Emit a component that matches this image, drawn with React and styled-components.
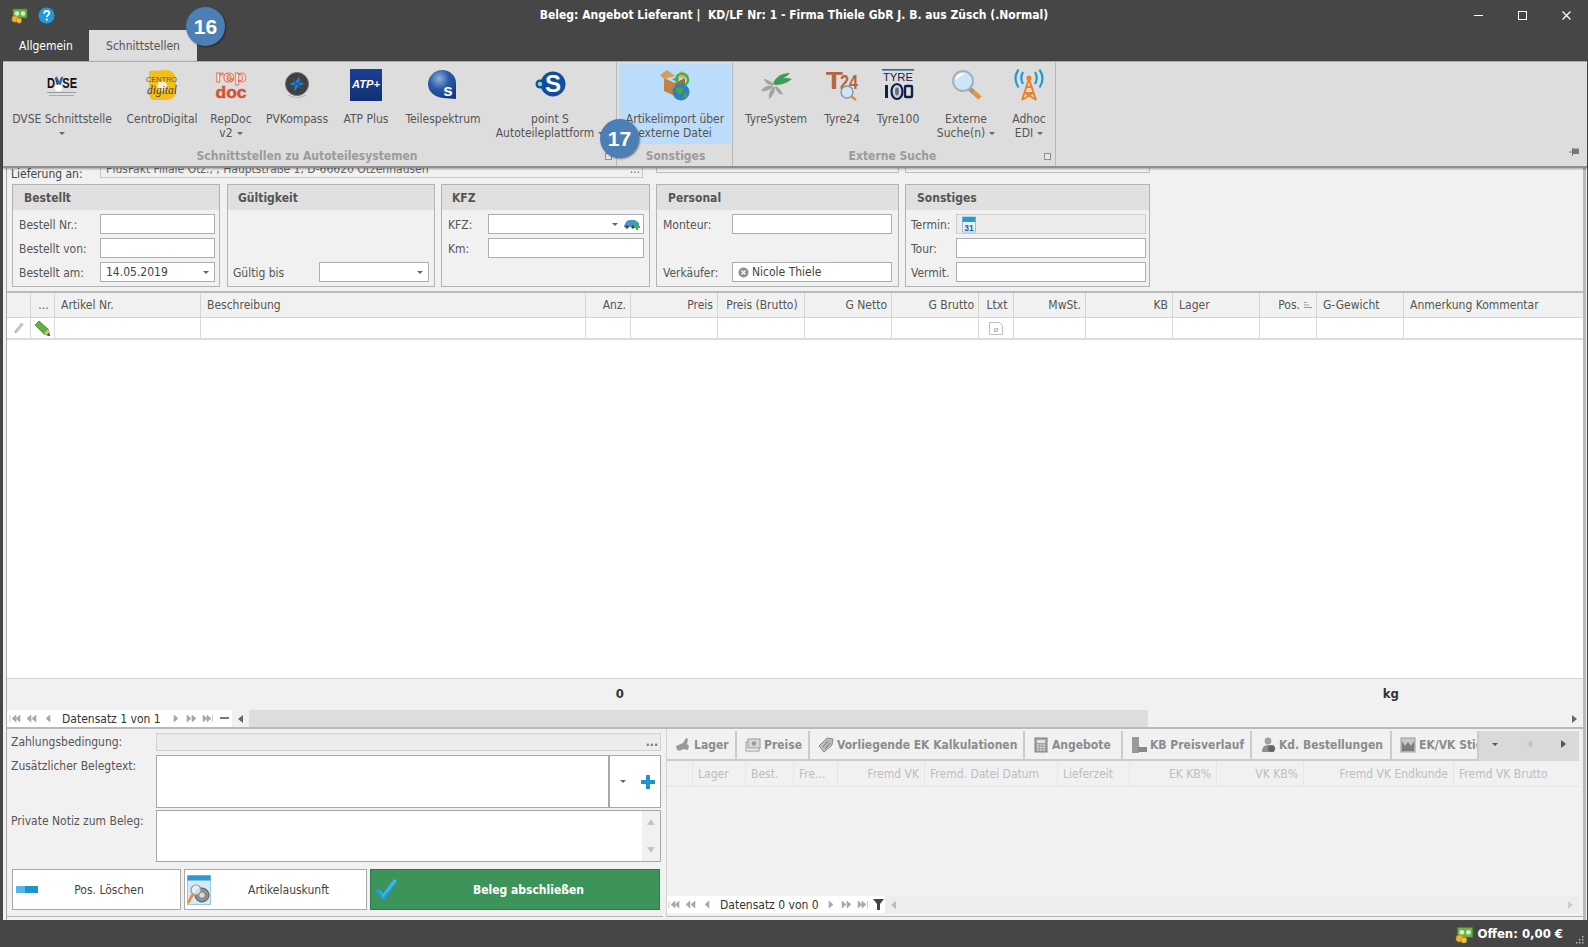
import React from "react";
import styled, { createGlobalStyle } from "styled-components";

const Global = createGlobalStyle`
  html, body { margin: 0; padding: 0; background: #464646; }
  body { font-family: "DejaVu Sans Condensed", "DejaVu Sans", sans-serif; font-stretch: condensed; font-size: 12px; color: #444; }
  * { box-sizing: border-box; }
`;

const Page = styled.div`
  position: relative; width: 1588px; height: 947px; background: #464646; display: flex; flex-direction: column; overflow: hidden;
`;
const TitleBar = styled.div`
  height: 30px; display: flex; align-items: center; flex: none; position: relative;
`;
const QuickIcons = styled.div`
  display: flex; align-items: center; gap: 10px; padding-left: 10px; width: 300px;
`;
const Title = styled.div`
  flex: 1; text-align: center; color: #fff; font-weight: 700; white-space: pre; font-size: 12px;
`;
const WinButtons = styled.div`
  width: 300px; display: flex; justify-content: flex-end; align-items: center; gap: 35px; padding-right: 17px;
`;
const TabBar = styled.div`
  height: 31px; flex: none; display: flex; align-items: flex-end; padding-left: 3px;
`;
const TopTab = styled.div`
  height: 31px; display: flex; align-items: center; justify-content: center; width: ${p => p.$w}px;
  color: ${p => p.$active ? "#555" : "#fff"}; background: ${p => p.$active ? "#dddddd" : "transparent"};
`;
const Ribbon = styled.div`
  height: 107px; flex: none; margin: 0 1px 0 3px; background: #dddddd; border-top: 1px solid #ababab; border-bottom: 2px solid #8f8f8f;
  display: flex; position: relative; z-index: 3; box-shadow: 0 1px 2px rgba(0,0,0,.35);
`;
const RibbonGroup = styled.div`
  width: ${p => p.$w}px; border-right: 1px solid #b9b9b9; display: flex; flex-direction: column; padding: 2px 0 0 ${p => p.$pl}px; position: relative;
`;
const GroupButtons = styled.div`
  display: flex; height: 80px;
`;
const RibbonBtn = styled.div`
  width: ${p => p.$w}px; height: 80px; padding-top: 5px; display: flex; flex-direction: column; align-items: center; text-align: center;
  background: ${p => p.$hover ? "#bcdcfb" : "transparent"}; line-height: 14px; color: #555; white-space: nowrap;
`;
const RibbonIcon = styled.div`
  width: 32px; height: 32px; margin-bottom: 11px; flex: none;
`;
const GroupLabel = styled.div`
  text-align: center; font-weight: 700; color: #9b9b9b; line-height: 14px; margin-top: 5px; padding-right: ${p => p.$pr || 0}px; white-space: nowrap;
`;
const Launcher = styled.div`
  position: absolute; right: 4px; bottom: 6px; width: 7px; height: 7px; border: 1px solid #8f8f8f; background: #e6e6e6;
`;
const Caret = styled.span`
  display: inline-block; width: 0; height: 0; border-left: 3px solid transparent; border-right: 3px solid transparent; border-top: 3px solid ${p => p.$c || "#666"};
  vertical-align: middle; margin-left: ${p => p.$ml ?? 4}px;
`;
const Pin = styled.div`
  position: absolute; right: 8px; bottom: 10px; width: 10px; height: 8px;
`;
const Bubble = styled.div`
  position: absolute; left: ${p => p.$x}px; top: ${p => p.$y}px; width: 39px; height: 39px; border-radius: 50%; background: #4c7fb6; color: #fff;
  display: flex; align-items: center; justify-content: center; font: 700 21px "Liberation Sans", sans-serif; z-index: 9; box-shadow: 1px 1px 2px rgba(0,0,0,.45);
`;
const Main = styled.div`
  flex: none; height: 752px; margin: 0 1px 0 3px; background: #f1f1f1; padding-left: 3px; display: flex;
`;
const Inner = styled.div`
  flex: 1; min-width: 0; border-left: 1px solid #a9a9a9; border-right: 3px solid #b9b9b9; margin-right: 1px; display: flex; flex-direction: column;
`;
const DeliveryRow = styled.div`
  height: 13px; flex: none; overflow: hidden; display: flex; align-items: flex-end; position: relative; padding-left: 4px;
`;
const DeliveryLabel = styled.div`
  width: 89px; line-height: 14px; height: 14px;
`;
const DeliveryInput = styled.div`
  width: 543px; height: 20px; margin-bottom: 3px; border: 1px solid #c8c8c8; padding: 3px 2px 0 5px; line-height: 14px; display: flex; justify-content: space-between; white-space: nowrap; color: #666;
`;
const GhostInput = styled.div`
  width: ${p => p.$w}px; height: 20px; margin: 0 0 8px ${p => p.$ml}px; border: 1px solid #bdbdbd;
`;
const Groups = styled.div`
  display: flex; padding: 3px 0 0 5px; flex: none; height: 106px;
`;
const Group = styled.div`
  width: ${p => p.$w}px; margin-right: ${p => p.$mr}px; height: 103px; border: 1px solid #b3b3b3; flex: none;
`;
const GroupHead = styled.div`
  height: 25px; background: #e0e0e0; font-weight: 700; color: #555; display: flex; align-items: center; padding-left: ${p => p.$pl}px;
`;
const GroupBody = styled.div`
  display: grid; grid-auto-rows: 20px; row-gap: 4px; padding: 4px ${p => p.$pr}px 0 ${p => p.$pl}px;
`;
const Field = styled.div`
  display: grid; grid-template-columns: ${p => p.$label}px 1fr; align-items: center;
`;
const FieldLabel = styled.div`
  white-space: nowrap; color: #555; padding-top: 1px;
`;
const Input = styled.div`
  height: 20px; background: ${p => p.$disabled ? "#ececec" : "#fff"}; border: 1px solid ${p => p.$disabled ? "#cfcfcf" : "#aeaeae"};
  display: flex; align-items: center; padding: 0 5px; color: #444; white-space: nowrap; justify-content: ${p => p.$between ? "space-between" : "flex-start"}; gap: 3px;
`;
const ComboRight = styled.span`
  display: flex; align-items: center; gap: 5px; margin-right: -2px;
`;
const Grid = styled.div`
  flex: 1; min-height: 0; border-top: 2px solid #b9b9b9; display: flex; flex-direction: column; margin-top: 4px;
`;
const mainCols = "24px 24px 146px 385px 45px 87px 87px 87px 87px 35px 72px 87px 87px 57px 87px 179px";
const HeadRow = styled.div`
  display: grid; grid-template-columns: ${mainCols}; height: 25px; background: #f1f1f1; border-bottom: 1px solid #d4d4d4; flex: none;
`;
const HeadCell = styled.div`
  border-right: 1px solid #d4d4d4; display: flex; align-items: center; padding: 0 4px 0 6px; color: #555; white-space: nowrap; overflow: hidden; justify-content: ${p => p.$a || "flex-start"};
  &:last-child { border-right: none; }
`;
const DataRow = styled.div`
  display: grid; grid-template-columns: ${mainCols}; height: 22px; background: #fff; border-bottom: 2px solid #dcdcdc; flex: none;
`;
const DataCell = styled.div`
  border-right: 1px solid #d9d9d9; display: flex; align-items: center; justify-content: center;
  &:last-child { border-right: none; }
`;
const GridEmpty = styled.div`
  flex: 1; background: #fff;
`;
const FooterRow = styled.div`
  display: grid; grid-template-columns: ${mainCols}; height: 32px; flex: none; border-top: 1px solid #d4d4d4; background: #f1f1f1; font-weight: 700; color: #333; font-size: 13px; align-items: center; padding-bottom: 2px;
`;
const FooterCell = styled.div`
  grid-column: ${p => p.$col}; text-align: right; padding-right: ${p => p.$pr}px;
`;
const NavBar = styled.div`
  height: ${p => p.$h}px; flex: none; display: flex; align-items: center; background: ${p => p.$bg || "#f1f1f1"};
`;
const NavWhite = styled.div`
  width: ${p => p.$w}px; height: 100%; background: #fff; display: flex; align-items: center; padding-left: ${p => p.$pl}px; flex: none; color: #333; white-space: nowrap;
`;
const NavSlot = styled.div`
  width: ${p => p.$w}px; margin-left: ${p => p.$ml || 0}px; height: 100%; display: flex; align-items: center; justify-content: center; flex: none;
`;
const NavText = styled.div`
  width: ${p => p.$w}px; flex: none; text-align: left; padding-left: ${p => p.$pl || 0}px;
`;
const Track = styled.div`
  width: ${p => p.$w}px; height: 100%; flex: none; background: ${p => p.$bg || "#dddddd"};
`;
const Spacer = styled.div`
  flex: 1;
`;
const Bottom = styled.div`
  height: 193px; flex: none; border-top: 2px solid #b9b9b9; display: flex; background: #f1f1f1; padding-bottom: 3px;
`;
const BottomLeft = styled.div`
  width: 656px; flex: none; padding: 4px 2px 0 5px; border-bottom: 1px solid #b5b5b5; display: flex; flex-direction: column;
`;
const FormGrid = styled.div`
  display: grid; grid-template-columns: 144px 505px; grid-template-rows: 22px 55px 52px;
`;
const FormLabel = styled.div`
  color: #555; padding-top: ${p => p.$pt}px; margin-left: -1px; white-space: nowrap; line-height: 14px;
`;
const DisabledInput = styled.div`
  background: #ececec; border: 1px solid #d2d2d2; margin-bottom: 4px; display: flex; justify-content: flex-end; align-items: center; padding-right: 2px; color: #777; line-height: 10px; font-weight: 700;
`;
const TextBox = styled.div`
  background: #fff; border: 1px solid #a8a8a8; margin-bottom: ${p => p.$mb || 0}px; display: flex; justify-content: flex-end;
`;
const ComboSide = styled.div`
  width: 52px; border-left: 2px solid #a8a8a8; display: flex; align-items: center; padding-left: 10px; gap: 15px;
`;
const Scroller = styled.div`
  width: 18px; background: #f1f1f1; display: flex; flex-direction: column; justify-content: space-between; align-items: center; padding: 8px 0;
`;
const ScrollArrow = styled.span`
  width: 0; height: 0; border-left: 4px solid transparent; border-right: 4px solid transparent;
  ${p => p.$up ? "border-bottom: 6px solid #c4c4c4;" : "border-top: 6px solid #c4c4c4;"}
`;
const ActionRow = styled.div`
  display: flex; gap: 3px; margin-top: 7px;
`;
const Action = styled.div`
  width: ${p => p.$w}px; height: 41px; flex: none; display: flex; align-items: center; padding-left: ${p => p.$pl}px;
  background: ${p => p.$green ? "#3c945a" : "#fff"}; border: 1px solid ${p => p.$green ? "#2a7a45" : "#a9a9a9"}; color: ${p => p.$green ? "#fff" : "#444"}; font-weight: ${p => p.$green ? 700 : 400};
`;
const ActionText = styled.div`
  flex: 1; text-align: center; white-space: nowrap;
`;
const BottomRight = styled.div`
  flex: 1; min-width: 0; margin-left: 3px; border-left: 1px solid #d4d4d4; padding: 2px 4px 3px 0; display: flex; flex-direction: column; border-bottom: 1px solid #b5b5b5;
`;
const TabStrip = styled.div`
  height: 30px; flex: none; display: flex; border-bottom: 2px solid #cbcbcb;
`;
const PageTab = styled.div`
  width: ${p => p.$w}px; flex: none; overflow: hidden; display: flex; align-items: center; padding-left: 8px; gap: 3px; font-weight: 700; color: #8c8c8c; white-space: nowrap; border-right: 2px solid #cbcbcb;
  &:last-of-type { border-right: none; }
`;
const TabScroll = styled.div`
  flex: 1; background: #d9d9d9; display: flex; align-items: center; justify-content: space-between; padding: 0 13px 4px 13px; margin-bottom: -2px;
`;
const Tri = styled.span`
  width: 0; height: 0; border-top: 4px solid transparent; border-bottom: 4px solid transparent;
  ${p => p.$dir === "l" ? `border-right: 5px solid ${p.$c};` : `border-left: 5px solid ${p.$c};`}
`;
const subCols = "26px 53px 48px 44px 87px 133px 72px 87px 87px 150px 1fr";
const SubHead = styled.div`
  display: grid; grid-template-columns: ${subCols}; height: 26px; flex: none; background: #f1f1f1; border-bottom: 1px solid #e3e3e3;
`;
const SubCell = styled.div`
  border-right: 1px solid #e6e6e6; display: flex; align-items: center; padding: 0 5px; color: #bdbdbd; overflow: hidden; white-space: nowrap; justify-content: ${p => p.$a || "flex-start"};
  &:last-child { border-right: none; }
`;
const SubBody = styled.div`
  flex: 1; background: #f2f2f2;
`;
const Status = styled.div`
  flex: 1; display: flex; align-items: center; justify-content: flex-end; color: #fff; font-weight: 700; padding-right: 25px; gap: 4px; font-size: 13px; position: relative;
`;
const Grip = styled.div`
  position: absolute; right: 4px; bottom: 3px; width: 9px; height: 9px;
`;

const G = ({ children, s = 32, v = 32 }) => <svg width={s} height={s} viewBox={`0 0 ${v} ${v}`} style={{ display: "block" }}>{children}</svg>;

const MoneyIcon = ({ s = 18 }) => (
  <G s={s} v={18}>
    <rect x="3" y="3" width="14" height="9" fill="#6fb04c" stroke="#3d7a2c" strokeWidth=".7" />
    <circle cx="7" cy="7.5" r="2.2" fill="#d7efc4" /><circle cx="13" cy="7.5" r="2.2" fill="#d7efc4" />
    <circle cx="5" cy="13" r="3.2" fill="#e9b52a" stroke="#b4801a" strokeWidth=".6" /><circle cx="9" cy="14.6" r="2.6" fill="#f1c23c" stroke="#b4801a" strokeWidth=".6" />
  </G>
);
const HelpIcon = () => (
  <svg width="17" height="17" viewBox="0 0 17 17" style={{ display: "block" }}>
    <circle cx="8.5" cy="8.5" r="8" fill="#1e9be0" />
    <path d="M6 6.6c0-1.6 1.2-2.6 2.7-2.6s2.6 1 2.6 2.2c0 1.9-2.5 1.9-2.5 3.8" fill="none" stroke="#fff" strokeWidth="1.8" />
    <circle cx="8.8" cy="12.6" r="1.1" fill="#fff" />
  </svg>
);
const Dvse = () => (
  <G>
    <text x="1" y="19" fontFamily="Liberation Sans" fontWeight="700" fontSize="14" fill="#111" textLength="30" lengthAdjust="spacingAndGlyphs">DVSE</text>
    <path d="M10 8 l3.5 7 l3-7" fill="none" stroke="#2b66c4" strokeWidth="2.2" />
    <circle cx="12.5" cy="19" r="3.6" fill="#fff" />
    <rect x="1" y="23" width="29" height="1" fill="#999" /><rect x="3" y="26" width="25" height="1" fill="#aaa" />
  </G>
);
const Centro = () => (
  <G>
    <path d="M3 2 L22 1 Q30 3 30 12 L30 24 Q29 30 21 31 L8 31 Q3 30 3 25 Z" fill="#f6bd16" />
    <circle cx="16" cy="17" r="5" fill="#fff" opacity=".8" />
    <text x="0" y="13" fontFamily="Liberation Sans" fontSize="7.5" fill="#555" textLength="31" lengthAdjust="spacingAndGlyphs">CENTRO</text>
    <text x="1" y="25" fontFamily="Liberation Serif" fontStyle="italic" fontSize="12" fill="#444" textLength="30" lengthAdjust="spacingAndGlyphs">digital</text>
  </G>
);
const RepDoc = () => (
  <G>
    <text x="16" y="13" textAnchor="middle" fontFamily="Liberation Sans" fontWeight="700" fontSize="17" fill="#fff" stroke="#e2705a" strokeWidth=".9" textLength="31" lengthAdjust="spacingAndGlyphs">rep</text>
    <text x="16" y="29" textAnchor="middle" fontFamily="Liberation Sans" fontWeight="700" fontSize="17" fill="#d9502f" stroke="#d9502f" strokeWidth=".5" textLength="31" lengthAdjust="spacingAndGlyphs">doc</text>
  </G>
);
const Kompass = () => (
  <G>
    <circle cx="16" cy="15" r="11.5" fill="#3f4042" stroke="#6e6e6e" /><path d="M7 26 Q16 31 25 26" fill="none" stroke="#bdbdbd" strokeWidth="1.2" />
    <path d="M19 7 L18 13 L24 15 L18 16.5 L13 23 L14 17 L8 15 L14 13 Z" fill="#2c7fd0" />
    <path d="M11 9 L16 14 L22 10 L18 15 L21 21 L16 16 L10 20 L14 15 Z" fill="#1d5da6" />
  </G>
);
const Atp = () => (
  <G>
    <defs><linearGradient id="atp" x1="0" y1="0" x2="0" y2="1"><stop offset="0" stopColor="#1a3f95" /><stop offset="1" stopColor="#123076" /></linearGradient></defs>
    <rect width="32" height="32" fill="url(#atp)" />
    <text x="16" y="19" textAnchor="middle" fontFamily="Liberation Sans" fontStyle="italic" fontWeight="700" fontSize="10" fill="#fff" textLength="28" lengthAdjust="spacingAndGlyphs">ATP+</text>
  </G>
);
const Teile = () => (
  <G>
    <defs><radialGradient id="tsp" cx=".4" cy=".3" r=".8"><stop offset="0" stopColor="#8fb0dc" /><stop offset=".45" stopColor="#2a5ba8" /><stop offset="1" stopColor="#12377c" /></radialGradient></defs>
    <path d="M15 1 C7 1 1 8 1 15 C1 23 8 28 16 29 L29 30 L29 14 C29 7 23 1 15 1 Z" fill="url(#tsp)" />
    <text x="21" y="27" textAnchor="middle" fontFamily="Liberation Sans" fontWeight="700" fontSize="17" fill="#fff">s</text>
  </G>
);
const PointS = () => (
  <G>
    <circle cx="19" cy="15" r="12.5" fill="#0f4fa1" /><circle cx="6" cy="15" r="4.5" fill="#0f4fa1" /><circle cx="6" cy="15" r="2.2" fill="#8fd9a3" />
    <text x="19" y="23" textAnchor="middle" fontFamily="Liberation Sans" fontWeight="700" fontSize="24" fill="#fff">S</text>
  </G>
);
const ImportIcon = () => (
  <G>
    <path d="M5 9 L16 14 L16 27 L5 22 Z" fill="#c08345" /><path d="M16 14 L26 9 L26 20 L16 27 Z" fill="#a9692f" />
    <path d="M1 6 L8 1 L16 7 L5 10 Z" fill="#d79b5c" /><path d="M16 7 L22 2 L30 6 L26 10 Z" fill="#e0ad71" />
    <circle cx="22" cy="23" r="8.5" fill="#2f81bc" /><path d="M17 19 Q21 17 24 20 Q25 24 21 25 Q17 25 17 19 M26 24 Q29 25 28 28 Q25 30 24 28 Z" fill="#4da24a" />
    <path d="M17 11 A6 6 0 1 1 26 16" fill="none" stroke="#39b54a" strokeWidth="2.4" /><path d="M13 10 L20 8 L19 14 Z" fill="#39b54a" />
  </G>
);
const TyreSys = () => (
  <G>
    <path d="M13 14 Q19 3 30 4 Q26 9 20 10 Q26 8 32 10 Q25 16 15 16 Z" fill="#3f9b58" />
    <path d="M14 15 Q7 10 4 10 Q5 15 13 17 Z M12 17 Q4 16 1 22 Q8 23 13 18 Z M13 18 Q8 24 9 30 Q15 26 15 18 Z M15 18 Q17 25 23 26 Q21 20 16 17 Z" fill="#a3a3a3" />
  </G>
);
const T24 = () => (
  <G>
    <text x="-1" y="20" fontFamily="Liberation Sans" fontWeight="700" fontSize="24" fill="#b4683e" textLength="18" lengthAdjust="spacingAndGlyphs">T</text>
    <text x="14" y="20" fontFamily="Liberation Sans" fontWeight="700" fontSize="20" fill="#b4683e" textLength="18" lengthAdjust="spacingAndGlyphs">24</text>
    <circle cx="21" cy="23" r="6" fill="#cfe5f5" stroke="#7b98ab" strokeWidth="1.3" /><path d="M25.5 27.5 L30 31" stroke="#e48a38" strokeWidth="2.4" />
  </G>
);
const Tyre100 = () => (
  <G>
    <rect x="0" y="0" width="32" height="1.6" fill="#1f6db0" />
    <text x="16" y="12" textAnchor="middle" fontFamily="Liberation Sans" fontSize="11" fill="#10204a" textLength="30" lengthAdjust="spacingAndGlyphs">TYRE</text>
    <rect x="3" y="16" width="3" height="13" fill="#10204a" />
    <ellipse cx="15" cy="22.5" rx="5.5" ry="7.5" fill="#cfd4dd" stroke="#10204a" strokeWidth="2.2" />
    <ellipse cx="15" cy="22.5" rx="2" ry="4" fill="#65707f" />
    <rect x="23" y="17" width="7" height="11" fill="none" stroke="#10204a" strokeWidth="2.4" rx="1" />
  </G>
);
const Magnifier = () => (
  <G>
    <circle cx="13" cy="12" r="10" fill="#cde5f6" stroke="#9fb2bf" strokeWidth="2" /><path d="M6 10 Q9 5 14 5" stroke="#fff" strokeWidth="2" fill="none" />
    <path d="M20 20 L30 29" stroke="#e8913c" strokeWidth="4.5" /><path d="M20 20 L23 23" stroke="#8d9aa2" strokeWidth="4" />
  </G>
);
const Antenna = () => (
  <G>
    <path d="M16 10 L9 31 M16 10 L23 31 M12 24 L20 24 M13.5 18 L18.5 18 M9 31 L20 24 M23 31 L12 24" stroke="#e8842f" strokeWidth="2" fill="none" />
    <circle cx="16" cy="9" r="2.6" fill="#e8842f" />
    <g fill="none" stroke="#1e9ad6" strokeWidth="2.2">
      <path d="M10 3 Q6.5 9 10 15" /><path d="M5.5 0.5 Q-.5 9 5.5 18.5" /><path d="M22 3 Q25.5 9 22 15" /><path d="M26.5 .5 Q32.5 9 26.5 18.5" />
    </g>
  </G>
);
const WinMin = () => <svg width="9" height="9" viewBox="0 0 9 9"><rect y="4" width="9" height="1" fill="#fff" /></svg>;
const WinMax = () => <svg width="9" height="9" viewBox="0 0 9 9"><rect x=".5" y=".5" width="8" height="8" fill="none" stroke="#fff" /></svg>;
const WinClose = () => <svg width="9" height="9" viewBox="0 0 9 9"><path d="M.5 .5 L8.5 8.5 M8.5 .5 L.5 8.5" stroke="#fff" strokeWidth="1.2" /></svg>;
const PinIcon = () => <svg width="10" height="8" viewBox="0 0 10 8" style={{ display: "block" }}><path d="M0 4 H4 M3.5 0 V8 M4 1 H9.5 V5.5 H4" fill="#777" stroke="#777" strokeWidth="1" /></svg>;
const CarIcon = () => <svg width="17" height="14" viewBox="0 0 17 14" style={{ display: "block" }}><path d="M1 9 L3 5 Q4 3 7 3 H12 L16 6 V10 H1 Z" fill="#4a93c7" /><circle cx="4" cy="10" r="1.7" fill="#444" /><circle cx="10" cy="10" r="1.7" fill="#444" /><path d="M11 10 H17 M14 7 V13" stroke="#39b54a" strokeWidth="2.2" /></svg>;
const Calendar = () => <svg width="14" height="17" viewBox="0 0 14 17" style={{ display: "block" }}><rect x=".5" y="1" width="13" height="15" fill="#e9f3fa" stroke="#9cc0da" /><rect x=".5" y="1" width="13" height="5" fill="#2d97d8" /><text x="7" y="15" textAnchor="middle" fontFamily="Liberation Sans" fontWeight="700" fontSize="8.5" fill="#1d5f8e">31</text></svg>;
const ClearIcon = () => <svg width="11" height="11" viewBox="0 0 11 11" style={{ display: "block" }}><circle cx="5.5" cy="5.5" r="5" fill="#8e8e8e" /><path d="M3.5 3.5 L7.5 7.5 M7.5 3.5 L3.5 7.5" stroke="#fff" strokeWidth="1.3" /></svg>;
const RowPencil = () => <svg width="10" height="12" viewBox="0 0 10 12" style={{ display: "block" }}><path d="M7.5 1 L9 2.5 L3 10 L1 11 L1.5 8.5 Z" fill="#cfcfcf" stroke="#9c9c9c" strokeWidth=".7" /></svg>;
const GreenPencil = () => <svg width="16" height="15" viewBox="0 0 16 15" style={{ display: "block" }}><path d="M4 0 L0 4 L9 13 L15 15 L13 8 Z" fill="#5db33c" stroke="#38791f" strokeWidth=".7" /><path d="M9 13 L15 15 L13 8 Z" fill="#e8b980" /><path d="M13.5 12 L15 15 L12 14 Z" fill="#333" /></svg>;
const NoteIcon = () => <svg width="16" height="13" viewBox="0 0 16 13" style={{ display: "block" }}><path d="M1.5 .5 H11 L14.5 3.5 V12.5 H1.5 Z" fill="#fff" stroke="#bcbcbc" /><text x="8" y="10" textAnchor="middle" fontFamily="Liberation Serif" fontStyle="italic" fontSize="9" fill="#888">a</text></svg>;
const SortIcon = () => <svg width="8" height="8" viewBox="0 0 8 8" style={{ display: "block", marginLeft: 4 }}><path d="M0 1.5 H2.5 M0 4 H5 M0 6.5 H8" stroke="#999" /></svg>;

const navPaths = {
  first: "M1 1 V8 M7 1 L3 4.5 L7 8 Z M11 1 L7 4.5 L11 8 Z",
  prevPage: "M5 1 L1 4.5 L5 8 Z M10 1 L6 4.5 L10 8 Z",
  prev: "M7 1 L3 4.5 L7 8 Z",
  next: "M4 1 L8 4.5 L4 8 Z",
  nextPage: "M1 1 L5 4.5 L1 8 Z M6 1 L10 4.5 L6 8 Z",
  last: "M1 1 L5 4.5 L1 8 Z M5 1 L9 4.5 L5 8 Z M10.5 1 V8",
};
const NavIcon = ({ k, c = "#a8a8a8" }) => <svg width="12" height="9" viewBox="0 0 12 9" style={{ display: "block" }}><path d={navPaths[k]} fill={c} stroke={c} strokeWidth=".6" /></svg>;
const Minus = () => <svg width="9" height="3" viewBox="0 0 9 3" style={{ display: "block" }}><rect width="9" height="2" fill="#777" /></svg>;
const Filter = () => <svg width="11" height="11" viewBox="0 0 11 11" style={{ display: "block" }}><path d="M0 0 H11 L7 5 V11 H4 V5 Z" fill="#444" /></svg>;
const PlusIcon = () => <svg width="14" height="16" viewBox="0 0 14 16" style={{ display: "block" }}><path d="M5 1 H9 V6 H14 V10 H9 V15 H5 V10 H0 V6 H5 Z" fill="#1f93d0" /></svg>;
const BarIcon = () => <svg width="22" height="8" viewBox="0 0 22 8" style={{ display: "block" }}><rect width="22" height="7" fill="#1f93d0" /><rect width="9" height="7" fill="#53b6e6" /></svg>;
const PartIcon = () => <svg width="24" height="30" viewBox="0 0 24 30" style={{ display: "block" }}><rect x=".5" y=".5" width="23" height="29" fill="#d6e9f5" stroke="#9cc8e3" /><rect x=".5" y=".5" width="23" height="5" fill="#2d97d8" /><circle cx="15" cy="20" r="7" fill="#8a8f93" stroke="#555" /><circle cx="15" cy="20" r="2.6" fill="#ddd" /><circle cx="9" cy="15" r="5" fill="#e4f1fa" fillOpacity=".8" stroke="#8d9aa2" strokeWidth="1.2" /><path d="M6 19 L1 28" stroke="#e8913c" strokeWidth="2.6" /></svg>;
const CheckIcon = () => <svg width="24" height="24" viewBox="0 0 24 24" style={{ display: "block" }}><path d="M1 13 L4 10 L9 16 L20 1 L23 3 L10 23 Z" fill="#1f9be0" /><path d="M4 10 L9 16 L20 1 L23 3 L9 19 Z" fill="#3db5ef" /></svg>;

const TI = ({ children }) => <svg width="16" height="16" viewBox="0 0 16 16" style={{ display: "block", flex: "none" }}>{children}</svg>;
const tabIcons = [
  <TI><path d="M1 9 L8 6 L8 12 Q5 15 2 13 Z M8 6 L11 1 L13 2 L12 7 L14 9 L13 13 L8 12 Z" fill="#9a9a9a" /></TI>,
  <TI><rect x="1" y="5" width="13" height="9" fill="none" stroke="#9a9a9a" /><rect x="3" y="2" width="12" height="9" fill="#d8d8d8" stroke="#9a9a9a" /><circle cx="9" cy="6.5" r="2.2" fill="#9a9a9a" /></TI>,
  <TI><path d="M1 9 L9 1 L15 2 L14 8 L6 15 Z" fill="#bdbdbd" stroke="#8a8a8a" /><path d="M5 10 L10 4 M7 12 L12 6" stroke="#777" /></TI>,
  <TI><rect x="2" y="1" width="12" height="14" fill="#a5a5a5" stroke="#808080" /><rect x="4" y="3" width="8" height="3" fill="#e3e3e3" /><path d="M4 8 H12 M4 10.5 H12 M4 13 H12" stroke="#e3e3e3" strokeDasharray="2 1" /></TI>,
  <TI><rect x="1" y="0" width="7" height="16" fill="#9a9a9a" /><rect x="7" y="10" width="9" height="5" fill="#8a8a8a" /></TI>,
  <TI><circle cx="8" cy="4" r="3.4" fill="#9f9f9f" /><path d="M2 15 Q2 8 8 8 Q13 8 14 15 Z" fill="#8f8f8f" /><circle cx="11.5" cy="11.5" r="3.6" fill="#666" /></TI>,
  <TI><rect x="1" y="1" width="14" height="14" fill="#c8c8c8" stroke="#999" /><path d="M2 4 L5 9 L8 5 L11 9 L14 4 V14 H2 Z" fill="#7e7e7e" /></TI>,
];

const btnsA = [
  ["DVSE Schnittstelle", null, 112, <Dvse />, "below"],
  ["CentroDigital", null, 88, <Centro />],
  ["RepDoc", "v2", 50, <RepDoc />, "inline"],
  ["PVKompass", null, 82, <Kompass />],
  ["ATP Plus", null, 56, <Atp />],
  ["Teilespektrum", null, 98, <Teile />],
  ["point S", "Autoteileplattform", 116, <PointS />, "inline"],
];
const btnsC = [
  ["TyreSystem", null, 76, <TyreSys />],
  ["Tyre24", null, 56, <T24 />],
  ["Tyre100", null, 56, <Tyre100 />],
  ["Externe", "Suche(n)", 80, <Magnifier />, "inline"],
  ["Adhoc", "EDI", 46, <Antenna />, "inline"],
];
const RBtn = ({ b }) => (
  <RibbonBtn $w={b[2]}>
    <RibbonIcon>{b[3]}</RibbonIcon>
    <div>{b[0]}</div>
    {b[1] && <div>{b[1]}{b[4] === "inline" && <Caret />}</div>}
    {b[4] === "below" && <div><Caret $ml={0} /></div>}
  </RibbonBtn>
);

const mainHead = [
  ["", 0], ["...", "center"], ["Artikel Nr."], ["Beschreibung"], ["Anz.", "flex-end"], ["Preis", "flex-end"], ["Preis (Brutto)", "center"], ["G Netto", "flex-end"], ["G Brutto", "flex-end"], ["Ltxt", "center"], ["MwSt.", "flex-end"], ["KB", "flex-end"], ["Lager"], ["Pos.", "flex-end", true], ["G-Gewicht"], ["Anmerkung Kommentar"],
];
const subHead = [["", 0], ["Lager"], ["Best."], ["Fre..."], ["Fremd VK", "flex-end"], ["Fremd. Datei Datum"], ["Lieferzeit"], ["EK KB%", "flex-end"], ["VK KB%", "flex-end"], ["Fremd VK Endkunde", "flex-end"], ["Fremd VK Brutto"]];
const pageTabs = [["Lager", 70], ["Preise", 73], ["Vorliegende EK Kalkulationen", 215], ["Angebote", 98], ["KB Preisverlauf", 129], ["Kd. Bestellungen", 140], ["EK/VK Stichtag", 87]];

export default function App() {
  return (
    <Page>
      <Global />
      <TitleBar>
        <QuickIcons><MoneyIcon /><HelpIcon /></QuickIcons>
        <Title>{"Beleg: Angebot Lieferant |  KD/LF Nr: 1 - Firma Thiele GbR J. B. aus Züsch (.Normal)"}</Title>
        <WinButtons><WinMin /><WinMax /><WinClose /></WinButtons>
      </TitleBar>
      <TabBar>
        <TopTab $w={86}>Allgemein</TopTab>
        <TopTab $w={108} $active>Schnittstellen</TopTab>
      </TabBar>
      <Bubble $x={186} $y={7}>16</Bubble>
      <Bubble $x={600} $y={119}>17</Bubble>
      <Ribbon>
        <RibbonGroup $w={614} $pl={3}>
          <GroupButtons>{btnsA.map(b => <RBtn key={b[0]} b={b} />)}</GroupButtons>
          <GroupLabel $pr={8}>Schnittstellen zu Autoteilesystemen</GroupLabel>
          <Launcher />
        </RibbonGroup>
        <RibbonGroup $w={116} $pl={2}>
          <GroupButtons><RibbonBtn $w={112} $hover><RibbonIcon><ImportIcon /></RibbonIcon><div>Artikelimport über</div><div>externe Datei</div></RibbonBtn></GroupButtons>
          <GroupLabel>Sonstiges</GroupLabel>
        </RibbonGroup>
        <RibbonGroup $w={323} $pl={5}>
          <GroupButtons>{btnsC.map(b => <RBtn key={b[0]} b={b} />)}</GroupButtons>
          <GroupLabel $pr={8}>Externe Suche</GroupLabel>
          <Launcher />
        </RibbonGroup>
        <Pin><PinIcon /></Pin>
      </Ribbon>
      <Main>
        <Inner>
          <DeliveryRow>
            <DeliveryLabel>Lieferung an:</DeliveryLabel>
            <DeliveryInput><span>PlusFakt Filiale Otz., , Hauptstraße 1, D-66620 Otzenhausen</span><span>...</span></DeliveryInput>
            <GhostInput $w={243} $ml={13} />
            <GhostInput $w={245} $ml={6} />
          </DeliveryRow>
          <Groups>
            <Group $w={208} $mr={7}>
              <GroupHead $pl={11}>Bestellt</GroupHead>
              <GroupBody $pl={6} $pr={4}>
                <Field $label={81}><FieldLabel>Bestell Nr.:</FieldLabel><Input /></Field>
                <Field $label={81}><FieldLabel>Bestellt von:</FieldLabel><Input /></Field>
                <Field $label={81}><FieldLabel>Bestellt am:</FieldLabel><Input $between>14.05.2019<Caret /></Input></Field>
              </GroupBody>
            </Group>
            <Group $w={208} $mr={6}>
              <GroupHead $pl={10}>Gültigkeit</GroupHead>
              <GroupBody $pl={5} $pr={5}>
                <div /><div />
                <Field $label={86}><FieldLabel>Gültig bis</FieldLabel><Input $between><span /><Caret /></Input></Field>
              </GroupBody>
            </Group>
            <Group $w={209} $mr={6}>
              <GroupHead $pl={10}>KFZ</GroupHead>
              <GroupBody $pl={6} $pr={5}>
                <Field $label={40}><FieldLabel>KFZ:</FieldLabel><Input $between><span /><ComboRight><Caret $ml={0} /><CarIcon /></ComboRight></Input></Field>
                <Field $label={40}><FieldLabel>Km:</FieldLabel><Input /></Field>
              </GroupBody>
            </Group>
            <Group $w={243} $mr={6}>
              <GroupHead $pl={11}>Personal</GroupHead>
              <GroupBody $pl={6} $pr={6}>
                <Field $label={69}><FieldLabel>Monteur:</FieldLabel><Input /></Field>
                <div />
                <Field $label={69}><FieldLabel>Verkäufer:</FieldLabel><Input><ClearIcon />Nicole Thiele</Input></Field>
              </GroupBody>
            </Group>
            <Group $w={245} $mr={0}>
              <GroupHead $pl={11}>Sonstiges</GroupHead>
              <GroupBody $pl={5} $pr={3}>
                <Field $label={45}><FieldLabel>Termin:</FieldLabel><Input $disabled><Calendar /></Input></Field>
                <Field $label={45}><FieldLabel>Tour:</FieldLabel><Input /></Field>
                <Field $label={45}><FieldLabel>Vermit.</FieldLabel><Input /></Field>
              </GroupBody>
            </Group>
          </Groups>
          <Grid>
            <HeadRow>
              {mainHead.map((h, i) => <HeadCell key={i} $a={h[1] || undefined}>{h[0]}{h[2] && <SortIcon />}</HeadCell>)}
            </HeadRow>
            <DataRow>
              {mainHead.map((h, i) => (
                <DataCell key={i}>
                  {i === 0 && <RowPencil />}
                  {i === 1 && <GreenPencil />}
                  {i === 9 && <NoteIcon />}
                </DataCell>
              ))}
            </DataRow>
            <GridEmpty />
            <FooterRow>
              <FooterCell $col={5} $pr={7}>0</FooterCell>
              <FooterCell $col={15} $pr={5}>kg</FooterCell>
            </FooterRow>
            <NavBar $h={17}>
              <NavWhite $w={225} $pl={2}>
                <NavSlot $w={12}><NavIcon k="first" /></NavSlot>
                <NavSlot $w={12} $ml={5}><NavIcon k="prevPage" /></NavSlot>
                <NavSlot $w={12} $ml={5}><NavIcon k="prev" /></NavSlot>
                <NavText $w={115} $pl={7}>Datensatz 1 von 1</NavText>
                <NavSlot $w={12}><NavIcon k="next" /></NavSlot>
                <NavSlot $w={12} $ml={4}><NavIcon k="nextPage" /></NavSlot>
                <NavSlot $w={12} $ml={4}><NavIcon k="last" /></NavSlot>
                <NavSlot $w={12} $ml={4}><Minus /></NavSlot>
              </NavWhite>
              <NavSlot $w={17}><Tri $dir="l" $c="#666" /></NavSlot>
              <Track $w={899} />
              <Spacer />
              <NavSlot $w={18}><Tri $c="#666" /></NavSlot>
            </NavBar>
            <Bottom>
              <BottomLeft>
                <FormGrid>
                  <FormLabel $pt={2}>Zahlungsbedingung:</FormLabel>
                  <DisabledInput>...</DisabledInput>
                  <FormLabel $pt={4}>Zusätzlicher Belegtext:</FormLabel>
                  <TextBox $mb={2}><ComboSide><Caret $ml={0} /><PlusIcon /></ComboSide></TextBox>
                  <FormLabel $pt={4}>Private Notiz zum Beleg:</FormLabel>
                  <TextBox><Scroller><ScrollArrow $up /><ScrollArrow /></Scroller></TextBox>
                </FormGrid>
                <ActionRow>
                  <Action $w={169} $pl={3}><BarIcon /><ActionText>Pos. Löschen</ActionText></Action>
                  <Action $w={183} $pl={2}><PartIcon /><ActionText>Artikelauskunft</ActionText></Action>
                  <Action $w={290} $pl={3} $green><CheckIcon /><ActionText>Beleg abschließen</ActionText></Action>
                </ActionRow>
              </BottomLeft>
              <BottomRight>
                <TabStrip>
                  {pageTabs.map((t, i) => <PageTab key={t[0]} $w={t[1]}>{tabIcons[i]}{t[0]}</PageTab>)}
                  <TabScroll><Caret $ml={0} $c="#555" /><Spacer /><Tri $dir="l" $c="#c0c0c0" /><NavSlot $w={29} /><Tri $c="#555" /></TabScroll>
                </TabStrip>
                <SubHead>
                  {subHead.map((h, i) => <SubCell key={i} $a={h[1] || undefined}>{h[0]}</SubCell>)}
                </SubHead>
                <SubBody />
                <NavBar $h={17} $bg="#ededed">
                  <NavWhite $w={218} $pl={1}>
                    <NavSlot $w={12}><NavIcon k="first" /></NavSlot>
                    <NavSlot $w={12} $ml={5}><NavIcon k="prevPage" /></NavSlot>
                    <NavSlot $w={12} $ml={5}><NavIcon k="prev" /></NavSlot>
                    <NavText $w={111} $pl={6}>Datensatz 0 von 0</NavText>
                    <NavSlot $w={12}><NavIcon k="next" /></NavSlot>
                    <NavSlot $w={12} $ml={4}><NavIcon k="nextPage" /></NavSlot>
                    <NavSlot $w={12} $ml={4}><NavIcon k="last" /></NavSlot>
                    <NavSlot $w={12} $ml={3}><Filter /></NavSlot>
                  </NavWhite>
                  <NavSlot $w={17}><Tri $dir="l" $c="#bbb" /></NavSlot>
                  <Spacer />
                  <NavSlot $w={18}><Tri $c="#ccc" /></NavSlot>
                </NavBar>
              </BottomRight>
            </Bottom>
          </Grid>
        </Inner>
      </Main>
      <Status>
        <MoneyIcon s={20} />Offen: 0,00 €
        <Grip><svg width="9" height="9" viewBox="0 0 9 9" style={{ display: "block" }}><path d="M7 1h1.4v1.4H7z M4 4h1.4v1.4H4z M7 4h1.4v1.4H7z M1 7h1.4v1.4H1z M4 7h1.4v1.4H4z M7 7h1.4v1.4H7z" fill="#bdbdbd" /></svg></Grip>
      </Status>
    </Page>
  );
}
